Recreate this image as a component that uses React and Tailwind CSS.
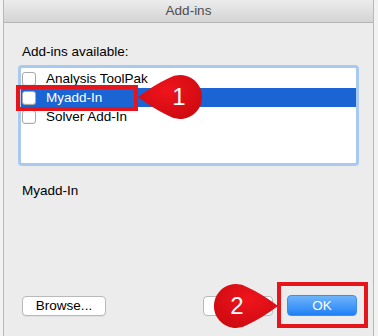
import React from 'react';

const addIns = [
  { name: 'Analysis ToolPak', selected: false },
  { name: 'Myadd-In', selected: true },
  { name: 'Solver Add-In', selected: false },
];

// red numbered marker, tip on the left or right
const Callout = ({ number, flip, className }) => (
  <svg className={className} width="68" height="48" viewBox="0 0 68 48">
    <defs>
      <radialGradient id={'cg' + number} cx="0.45" cy="0.35" r="0.7">
        <stop offset="0" stopColor="#f0141c" />
        <stop offset="1" stopColor="#cc0a10" />
      </radialGradient>
    </defs>
    <g transform={flip ? 'translate(68 0) scale(-1 1)' : undefined}>
      <path
        d="M2 24 Q18 12 32.5 5.3 A22 22 0 1 1 32.5 42.7 Q18 36 2 24 Z"
        fill={'url(#cg' + number + ')'}
      />
    </g>
    <text
      x={flip ? 25 : 43}
      y="32"
      textAnchor="middle"
      fill="#fff"
      fontSize="24"
      fontFamily="'Liberation Sans', Arial, sans-serif"
    >
      {number}
    </text>
  </svg>
);

const App = () => {
  return (
    <div className="relative w-[378px] h-[336px] overflow-hidden bg-[#f2f2f2] font-['Liberation_Sans',Arial,sans-serif] text-[13.5px] text-black">
      <div className="ml-[3px] w-[371px] h-full flex flex-col bg-[#ececec] border-l border-r border-[#b8b8b8]">
        {/* title bar */}
        <div className="h-[23px] shrink-0 flex items-center justify-center bg-gradient-to-b from-[#ececec] to-[#d4d4d4] border-b border-[#b4b4b4] text-[#4d4d4d]">
          Add-ins
        </div>

        <div className="flex-1 flex flex-col pl-[14px]">
          <div className="mt-[21px] ml-[4px] leading-[16px]">Add-ins available:</div>

          <div className="mt-[5px] w-[341px] h-[101px] rounded-[4px] border-[3px] border-[#a9caf0] bg-white pt-[1px]">
            {addIns.map((item) => (
              <div
                key={item.name}
                className={`h-[19px] flex items-center pl-[1px] ${item.selected ? 'bg-[#1a64d3] text-white' : ''}`}
              >
                <span className="w-[14px] h-[14px] rounded-[3px] border border-[#a8a8a8] bg-white shadow-[inset_0_-1px_1px_rgba(0,0,0,0.06)]" />
                <span className="ml-[10px] leading-[16px]">{item.name}</span>
              </div>
            ))}
          </div>

          <div className="mt-[17px] ml-[4px] leading-[16px]">Myadd-In</div>

          <div className="flex-1" />

          <div className="flex items-center pb-[20px] ml-[4px]">
            <button className="w-[84px] h-[20px] rounded-[4px] border border-[#b9b9b9] bg-white leading-none shadow-[0_1px_0_rgba(0,0,0,0.05)]">
              Browse...
            </button>
            <button className="ml-[97px] w-[70px] h-[20px] rounded-[4px] border border-[#b9b9b9] bg-white leading-none">
              Cancel
            </button>
            <button className="ml-[14px] w-[70px] h-[21px] rounded-[4px] border border-[#3f8cf0] bg-gradient-to-b from-[#6db4fb] to-[#1b80f5] text-white leading-none">
              OK
            </button>
          </div>
        </div>
      </div>

      {/* annotation overlays */}
      <div className="absolute left-[16px] top-[85px] w-[122px] h-[26px] border-[4px] border-[#e6141b]" />
      <Callout number="1" className="absolute left-[136px] top-[73px]" />

      <div className="absolute left-[277px] top-[282px] w-[91px] h-[46px] border-[4px] border-[#e6141b]" />
      <Callout number="2" flip className="absolute left-[212px] top-[282px]" />
    </div>
  );
};

export default App;
